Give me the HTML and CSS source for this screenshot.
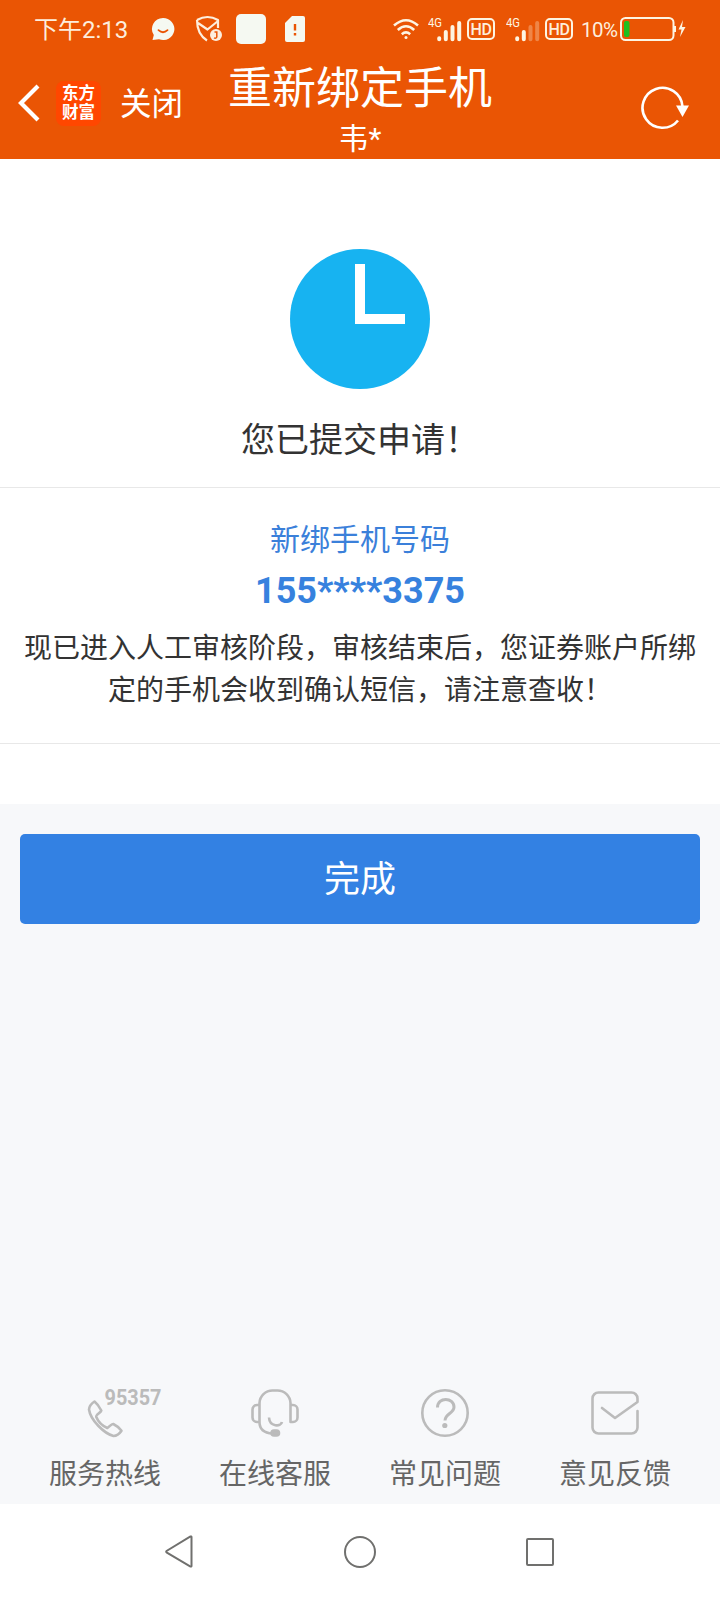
FILE: index.html
```html
<!DOCTYPE html>
<html lang="zh-CN">
<head>
    <meta charset="UTF-8">
    <title>重新绑定手机</title>
    <link rel="stylesheet" href="styles.css">
</head>
<body>
    <header>
        <div class="status-bar">
            <span class="time">下午2:13</span>
            <svg class="ico-chat" width="24" height="24" viewBox="0 0 24 24">
                <path d="M12 1a11.2 11 0 1 1-4 21.2L1.500 23l1.300-5A11.200 11 0 0 1 12 1z" fill="#f5f9f2"/>
                <path d="M7.500 13.200q4.500 4 9 0" fill="none" stroke="#ea5504" stroke-width="1.800" stroke-linecap="round"/>
            </svg>
            <svg class="ico-shield" width="28" height="28" viewBox="0 0 28 28">
                <path d="M2 5q10.500-6 21 0v8M2 5c0 10 3 16 10 20.500M3 8l9.500 6.500L23 6" fill="none" stroke="#fdeedd" stroke-width="2.200" stroke-linejoin="round"/>
                <circle cx="21" cy="20" r="6" fill="#fdeedd"/>
                <path d="M19.500 17h2.300v5q-.8 1.800-2.800.8" fill="none" stroke="#ea5504" stroke-width="1.500"/>
            </svg>
            <span class="app-square"></span>
            <svg class="ico-sim" width="20" height="26" viewBox="0 0 20 26">
                <path d="M7 0h11a2 2 0 0 1 2 2v22a2 2 0 0 1-2 2H2a2 2 0 0 1-2-2V7z" fill="#f5f9f2"/>
                <path d="M10 8v6.500M10 17v2.500" stroke="#ea5504" stroke-width="2.400"/>
            </svg>
            <div class="status-right">
                <svg class="ico-wifi" width="28" height="24" viewBox="0 0 28 24">
                    <path d="M2 8.500q12-10.500 24 0M5.800 13q8.200-7.500 16.400 0M9.800 17.200q4.200-3.600 8.400 0" fill="none" stroke="#fdf5e3" stroke-width="2.600"/>
                    <circle cx="14" cy="20.500" r="1.500" fill="#fdf5e3"/>
                </svg>
                <svg class="ico-signal" width="34" height="32" viewBox="0 -3 34 32">
                    <text x="0" y="11" class="net" textLength="14" lengthAdjust="spacingAndGlyphs">4G</text>
                    <path d="M11.200 22.200v1M17.800 16v7.200M24.500 11v12.200M31.200 7v16.200" class="bar"/>
                </svg>
                <span class="hd">HD</span>
                <svg class="ico-signal second" width="34" height="32" viewBox="0 -3 34 32">
                    <text x="0" y="11" class="net" textLength="14" lengthAdjust="spacingAndGlyphs">4G</text>
                    <path d="M11.200 22.200v1M17.800 16v7.200" class="bar"/>
                    <path d="M24.500 11v12.200M31.200 7v16.200" class="bar dim"/>
                </svg>
                <span class="hd">HD</span>
                <span class="percent">10%</span>
                <svg width="68" height="26" viewBox="0 0 68 26">
                    <rect x="1" y="2" width="52.500" height="22" rx="4.500" fill="none" stroke="#fdf5e3" stroke-width="2"/>
                    <rect x="4" y="5" width="5.500" height="16" rx="2" fill="#1fc01f"/>
                    <path d="M54 10h2v6h-2z" fill="#fdf5e3"/>
                    <path d="M63 4l-4.500 9.500h3l-1.500 7.500 5.500-10h-3.500z" fill="#fdf5e3"/>
                </svg>
            </div>
        </div>
        <div class="title-bar">
            <div class="left">
                <svg class="back" width="24" height="40" viewBox="0 0 24 40">
                    <path d="M21 3L4 20l17 17" fill="none" stroke="#fff" stroke-width="4.200"/>
                </svg>
                <div class="logo">东方<br>财富</div>
                <span class="close">关闭</span>
            </div>
            <div class="title">
                <h1>重新绑定手机</h1>
                <p>韦*</p>
            </div>
            <svg class="refresh" width="50" height="46" viewBox="0 0 50 46">
                <path d="M41.500 21.500A20 20 0 1 0 37 35.500" fill="none" stroke="#fff" stroke-width="2.600"/>
                <path d="M35 20.500h13l-6.500 11.500z" fill="#fff"/>
            </svg>
        </div>
    </header>

    <main>
        <section class="result">
            <svg width="140" height="140" viewBox="0 0 140 140">
                <circle cx="70" cy="70" r="70" fill="#17b3f1"/>
                <path d="M65 15h10v50h40v10H65z" fill="#fff"/>
            </svg>
            <p>您已提交申请！</p>
        </section>
        <section class="detail">
            <div class="label">新绑手机号码</div>
            <div class="phone">155****3375</div>
            <p>现已进入人工审核阶段，审核结束后，您证券账户所绑定的手机会收到确认短信，请注意查收！</p>
        </section>
        <div class="blank"></div>
        <button class="done">完成</button>
    </main>

    <footer>
        <div class="item">
            <svg width="80" height="50" viewBox="0 0 80 50">
                <path d="M29.500 13.500c2.500 2 5 5.500 6.800 9-.8 2.500-5.800 4.300-5 6.500 2 5 6.500 9 11 11 2-1 4-4.500 6-4 3.200 1.500 6 4 8.200 6.800-2 3-5 5.200-8 5.200C39 45.500 25.500 32 24 21.500c.3-3.500 2.500-6 5.500-8z"/>
                <text x="39.500" y="17.300" textLength="57" lengthAdjust="spacingAndGlyphs">95357</text>
            </svg>
            <span>服务热线</span>
        </div>
        <div class="item">
            <svg width="80" height="50" viewBox="0 0 80 50">
                <path d="M24.500 35V15a13 13 0 0 1 13-12.500h5a13 13 0 0 1 13 12.500v19H58a4.500 4.500 0 0 0 4.500-4.500v-8A4.500 4.500 0 0 0 58 17h-2M24.500 17H22a4.500 4.500 0 0 0-4.500 4.500v8A4.500 4.500 0 0 0 22 34h2.500c0 7 4.500 11 13 11.500M34 29.500c.5 9.500 12 9.500 13 4.500"/>
                <rect x="36.500" y="42.500" width="7.500" height="5" rx="2.500" class="mic"/>
            </svg>
            <span>在线客服</span>
        </div>
        <div class="item">
            <svg width="80" height="50" viewBox="0 0 80 50">
                <circle cx="40" cy="25" r="22.700"/>
                <path d="M32.500 19.500c0-11 16.500-10.500 16.500-.5 0 6.500-9 6.500-9 13.500" class="thick"/>
                <circle cx="39.800" cy="37.500" r="2.600" class="dot"/>
            </svg>
            <span>常见问题</span>
        </div>
        <div class="item">
            <svg width="80" height="50" viewBox="0 0 80 50">
                <path d="M62.500 23v16.500a6 6 0 0 1-6 6h-33a6 6 0 0 1-6-6v-29a6 6 0 0 1 6-6h33a6 6 0 0 1 6 6V14L40 30 27 20" stroke-linecap="round"/>
            </svg>
            <span>意见反馈</span>
        </div>
    </footer>

    <nav>
        <svg width="34" height="34" viewBox="0 0 34 34"><path d="M28.500 2v29a.7.7 0 0 1-1 .5L3.500 17.300a.8.8 0 0 1 0-1.300l24-14.500a.7.7 0 0 1 1 .5z"/></svg>
        <svg width="34" height="34" viewBox="0 0 34 34"><circle cx="17" cy="17" r="15"/></svg>
        <svg width="34" height="34" viewBox="0 0 34 34"><rect x="4" y="4" width="26" height="26" rx="1"/></svg>
    </nav>
</body>
</html>
```
FILE: styles.css
```css
* {
    box-sizing: border-box;
}
body {
    margin: 0;
    height: 1600px;
    display: flex;
    flex-direction: column;
    background-color: #f7f8fa;
    color: #333;
    font-family: Roboto, "Noto Sans CJK SC", sans-serif;
}
h1, p {
    margin: 0;
    font-weight: normal;
}
svg {
    display: block;
    flex-shrink: 0;
}
header {
    height: 159px;
    background-color: #ea5504;
    color: #fff;
}

/* status bar */
.status-bar {
    display: flex;
    align-items: center;
    height: 58px;
    padding: 0 32px 0 34px;
    color: #fdeedd;
}
.time {
    width: 117px;
    padding-top: 2px;
    font-size: 24px;
    line-height: 30px;
}
.ico-shield {
    margin-left: 20px;
}
.app-square {
    width: 30px;
    height: 30px;
    margin-left: 13px;
    border-radius: 5px;
    background-color: #f5f9f2;
}
.ico-sim {
    margin-left: 19px;
}
.status-right {
    display: flex;
    align-items: center;
    margin-left: auto;
}
.ico-signal {
    margin-left: 8px;
}
.ico-signal.second {
    margin-left: 11px;
}
.net {
    font-size: 13.5px;
    fill: #fdf5e3;
}
.bar {
    stroke: #fdf5e3;
    stroke-width: 4;
    stroke-linecap: round;
}
.dim {
    opacity: 0.3;
}
.hd {
    width: 28px;
    height: 22px;
    margin-left: 5px;
    border: 2px solid #fdf5e3;
    border-radius: 5px;
    font-size: 16px;
    font-weight: 500;
    line-height: 19px;
    text-align: center;
    letter-spacing: -0.5px;
}
.percent {
    width: 39px;
    margin-left: 8px;
    padding-top: 2px;
    font-size: 20.5px;
    letter-spacing: -0.5px;
}

/* title bar */
.title-bar {
    display: grid;
    grid-template-columns: 1fr auto 1fr;
    height: 101px;
}
.left {
    display: flex;
    align-items: center;
    height: 90px;
    padding-left: 17px;
}
.logo {
    width: 45px;
    height: 45px;
    margin-left: 15px;
    border-radius: 8px;
    background-color: #ff4700;
    font-size: 16.5px;
    font-weight: bold;
    line-height: 19px;
    padding-top: 3px;
    text-align: center;
}
.close {
    margin-left: 19px;
    padding-bottom: 5px;
    font-size: 31.5px;
}
.title {
    text-align: center;
}
.title h1 {
    font-size: 44px;
    line-height: 62px;
}
.title p {
    font-size: 30px;
    line-height: 38px;
}
.refresh {
    justify-self: end;
    margin: 27px 29px 0 0;
}

.result {
    height: 328px;
    padding-top: 90px;
    background-color: #fff;
}
.result svg {
    margin: 0 auto;
}
.result p {
    margin-top: 26px;
    font-size: 34px;
    line-height: 50px;
    text-align: center;
}
.detail {
    height: 257px;
    padding: 32px 20px 0;
    background-color: #fff;
    border-top: 1px solid #e8e8e8;
    border-bottom: 1px solid #e8e8e8;
    text-align: center;
}
.label {
    color: #3b80da;
    font-size: 30px;
    line-height: 40px;
}
.phone {
    margin-top: 11px;
    color: #3681de;
    font-size: 36px;
    font-weight: bold;
    line-height: 40px;
}
.detail p {
    margin-top: 17px;
    font-size: 28px;
    line-height: 42px;
}
.blank {
    height: 60px;
    background-color: #fff;
}
.done {
    display: block;
    width: 680px;
    height: 90px;
    margin: 30px auto 0;
    padding: 0 0 7px;
    border: none;
    border-radius: 5px;
    background-color: #3381e3;
    color: #fff;
    font-family: inherit;
    font-size: 36px;
}

footer {
    display: flex;
    margin-top: auto;
    padding: 0 20px;
    height: 116px;
}
.item {
    flex: 1;
    display: flex;
    flex-direction: column;
    align-items: center;
    color: #666;
    font-size: 28px;
    line-height: 40px;
}
.item span {
    margin-top: 17px;
}
.item svg {
    overflow: visible;
    fill: none;
    stroke: #bbb;
    stroke-width: 2.6;
    stroke-linejoin: round;
}
.item text {
    fill: #bbb;
    stroke: none;
    font-size: 22px;
    font-weight: bold;
}
.item .thick {
    stroke-width: 3;
}
.item .mic, .item .dot {
    fill: #bbb;
}
.item .dot {
    stroke: none;
}

nav {
    display: flex;
    justify-content: space-between;
    height: 96px;
    padding: 31px 163px 0;
    background-color: #fff;
}
nav svg {
    fill: none;
    stroke: #70706e;
    stroke-width: 2;
}
```
